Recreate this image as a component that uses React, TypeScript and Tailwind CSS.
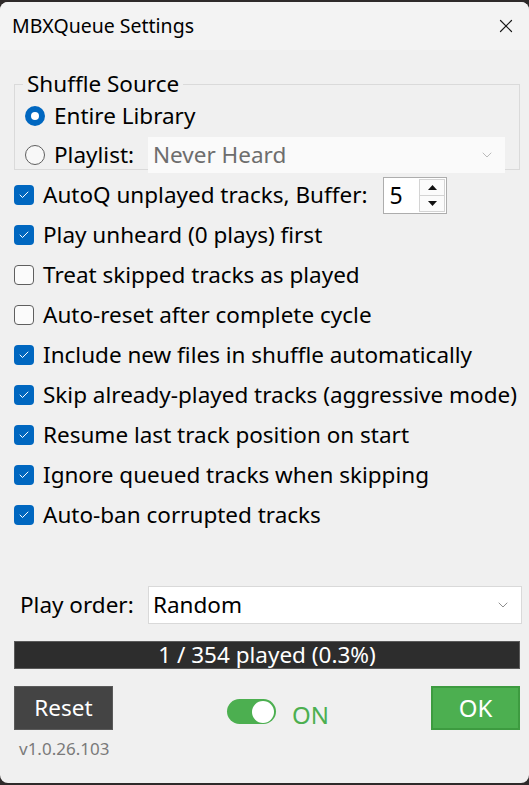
import { X, ChevronDown, Check } from 'lucide-react'

const options = [
    { label: 'Play unheard (0 plays) first', checked: true },
    { label: 'Treat skipped tracks as played', checked: false },
    { label: 'Auto-reset after complete cycle', checked: false },
    { label: 'Include new files in shuffle automatically', checked: true },
    { label: 'Skip already-played tracks (aggressive mode)', checked: true },
    { label: 'Resume last track position on start', checked: true },
    { label: 'Ignore queued tracks when skipping', checked: true },
    { label: 'Auto-ban corrupted tracks', checked: true },
]

function Checkbox({ checked }: { checked: boolean }) {
    return checked ? (
        <span className="w-[20px] h-[20px] rounded-[4px] bg-[#0067c0] flex items-center justify-center shrink-0">
            <Check size={12} strokeWidth={2} className="text-white" />
        </span>
    ) : (
        <span className="w-[20px] h-[20px] rounded-[4px] border border-[#5f5f5f] bg-[#fbfbfb] shrink-0" />
    )
}

function Radio({ checked }: { checked: boolean }) {
    return checked ? (
        <span className="w-[20px] h-[20px] rounded-full bg-[#0067c0] flex items-center justify-center shrink-0">
            <span className="w-[8px] h-[8px] rounded-full bg-white" />
        </span>
    ) : (
        <span className="w-[20px] h-[20px] rounded-full border border-[#5f5f5f] bg-[#f8f8f8] shrink-0" />
    )
}

export default function App() {
    return (
        <div className="w-[529px] h-[785px] bg-[#2e2a2a] pt-[2px] overflow-hidden" style={{ fontFamily: '"Segoe UI", "Noto Sans", sans-serif' }}>
            <div className="h-[781px] bg-[#f0f0f0] rounded-[8px] flex flex-col text-[#000] overflow-hidden">
                {/* title bar */}
                <div className="h-[48px] bg-[#f3f3f3] flex items-center justify-between pl-[12px] pr-[12px]">
                    <span className="text-[19.5px]">MBXQueue Settings</span>
                    <X size={22} strokeWidth={1.3} className="text-[#1a1a1a]" />
                </div>

                <div className="flex-1 flex flex-col text-[22.5px]">
                    <fieldset className="ml-[14px] mr-[9px] mt-[20px] border border-[#dadada] px-0 pb-0 h-[100px]">
                        <legend className="ml-[8px] px-[4px] text-[22.5px] leading-[28px]">Shuffle Source</legend>
                        <div className="flex items-center gap-[9px] pl-[10px] h-[36px]">
                            <Radio checked />
                            <span>Entire Library</span>
                        </div>
                        <div className="flex items-center pl-[10px] h-[39px] mt-[1px]">
                            <Radio checked={false} />
                            <span className="ml-[9px]">Playlist:</span>
                            <div className="ml-auto mr-[14px] w-[357px] h-[36px] bg-[#fafafa] flex items-center justify-between pl-[5px] pr-[10px]">
                                <span className="text-[#6d6d6d]">Never Heard</span>
                                <ChevronDown size={16} strokeWidth={1} className="text-[#9a9a9a]" />
                            </div>
                        </div>
                    </fieldset>

                    <div className="flex flex-col pl-[14px] mt-[5px]">
                        <div className="flex items-center h-[40px]">
                            <Checkbox checked />
                            <span className="ml-[9px]">AutoQ unplayed tracks, Buffer:</span>
                            <div className="ml-[16px] w-[64px] h-[37px] border border-[#adadad] bg-white flex">
                                <span className="flex-1 pl-[5px] leading-[35px] text-[23px]">5</span>
                                <div className="w-[27px] flex flex-col py-[1px] pr-[1px]">
                                    <div className="flex-1 border border-[#d4d4d4] bg-[#fbfbfb] flex items-center justify-center">
                                        <svg width="9" height="5" viewBox="0 0 9 5"><path d="M0 5 L4.5 0 L9 5 Z" fill="#111" /></svg>
                                    </div>
                                    <div className="flex-1 border border-[#d4d4d4] border-t-0 bg-[#fbfbfb] flex items-center justify-center">
                                        <svg width="9" height="5" viewBox="0 0 9 5"><path d="M0 0 L4.5 5 L9 0 Z" fill="#111" /></svg>
                                    </div>
                                </div>
                            </div>
                        </div>
                        {options.map((o) => (
                            <div key={o.label} className="flex items-center h-[40px]">
                                <Checkbox checked={o.checked} />
                                <span className="ml-[9px] whitespace-nowrap">{o.label}</span>
                            </div>
                        ))}
                    </div>

                    <div className="flex items-center mt-[51px] pl-[20px] pr-[7px]">
                        <span>Play order:</span>
                        <div className="ml-auto w-[374px] h-[38px] bg-white border border-[#d9d9d9] flex items-center justify-between pl-[4px] pr-[10px]">
                            <span>Random</span>
                            <ChevronDown size={16} strokeWidth={1} className="text-[#555]" />
                        </div>
                    </div>

                    <div className="ml-[14px] mr-[9px] mt-[17px] h-[28px] bg-[#2d2d2d] border border-[#5a5a5a] flex items-center justify-center text-white leading-none">
                        1 / 354 played (0.3%)
                    </div>

                    <div className="flex items-start mt-[17px] pl-[14px] pr-[9px]">
                        <div className="flex flex-col">
                            <div className="w-[99px] h-[44px] bg-[#444444] border border-[#5a5a5a] flex items-center justify-center text-white">Reset</div>
                            <span className="mt-[6px] ml-[5px] text-[17px] text-[#7a7a7a]">v1.0.26.103</span>
                        </div>
                        <div className="flex items-center mt-[10px] ml-[114px]">
                            <div className="w-[49px] h-[25px] rounded-full bg-[#4caf50] flex items-center justify-end pr-[2px]">
                                <span className="w-[22px] h-[22px] rounded-full bg-white" />
                            </div>
                            <span className="ml-[16px] mt-[7px] text-[#4caf50] text-[24px] leading-none">ON</span>
                        </div>
                        <div className="ml-auto w-[89px] h-[44px] bg-[#4caf50] border-2 border-[#3d9b40] flex items-center justify-center text-white text-[24px]">OK</div>
                    </div>
                </div>
            </div>
        </div>
    )
}
